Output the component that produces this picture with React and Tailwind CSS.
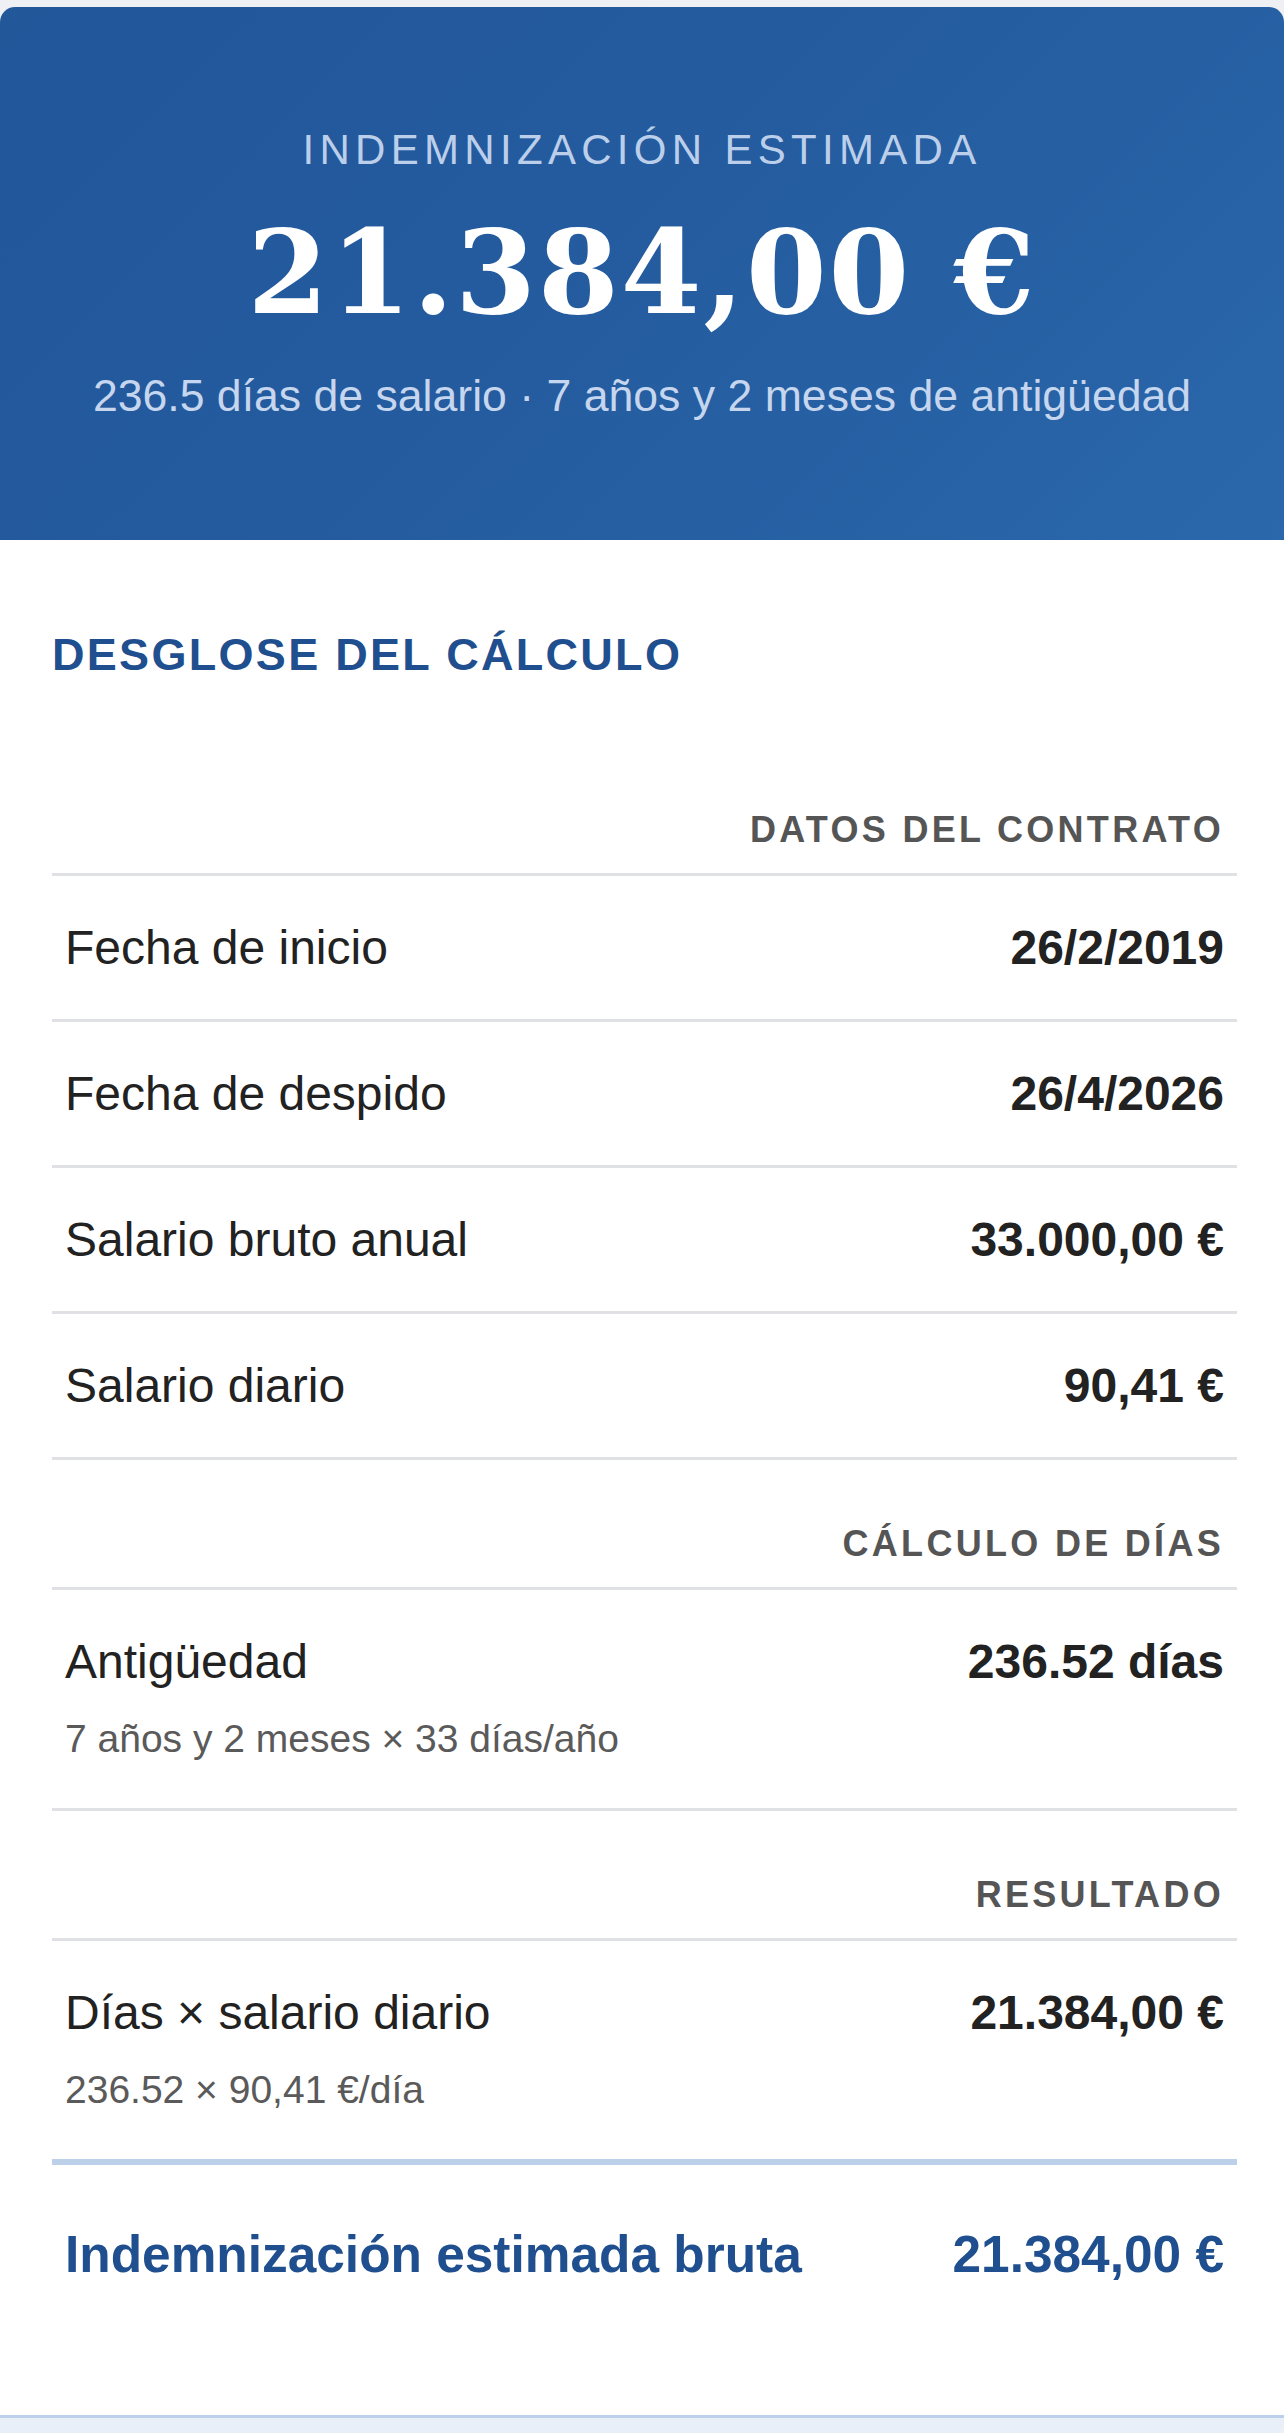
import React from "react";

const sans = { fontFamily: '"Liberation Sans", Arial, Helvetica, sans-serif' };

function SectionHeader({ children }) {
  return (
    <div className="pt-[57px] pb-[16px] px-[13px] border-b-[3px] border-[#dfe1e5] text-right">
      <span className="text-[36px] leading-[54px] font-bold tracking-[3.3px] text-[#555555]">{children}</span>
    </div>
  );
}

function Row({ label, value, sub, last }) {
  return (
    <div
      className={
        "flex items-start justify-between px-[13px] pt-[36px] " +
        (sub ? "pb-[40px] " : "pb-[36px] ") +
        (last ? "border-b-[6px] border-[#bcd0ea]" : "border-b-[3px] border-[#dfe1e5]")
      }
    >
      <div className="flex flex-col">
        <span className="text-[48px] leading-[71px] text-[#222222]">{label}</span>
        {sub && <span className="mt-[13px] text-[39px] leading-[58px] text-[#5a5a5a]">{sub}</span>}
      </div>
      <span className="text-[48px] leading-[71px] font-bold text-[#222222]">{value}</span>
    </div>
  );
}

export default function App() {
  return (
    <div className="w-[1284px] min-h-[2433px] bg-[#eef0f3] pt-[7px]" style={sans}>
      <div className="bg-white rounded-t-[15px] overflow-hidden">
        {/* Result header */}
        <div className="bg-[linear-gradient(135deg,#22579a_0%,#245c9f_50%,#2a67ab_100%)] pt-[111px] pb-[110px] flex flex-col items-center text-center">
          <div className="text-[42px] leading-[63px] tracking-[5.3px] text-[#bccfea]">INDEMNIZACIÓN ESTIMADA</div>
          <div
            className="mt-[33px] text-[116px] leading-none font-bold tracking-[2px] text-white"
            style={{ fontFamily: '"DejaVu Serif", "Liberation Serif", Georgia, serif' }}
          >
            21.384,00 €
          </div>
          <div className="mt-[32px] text-[44.6px] leading-[67.5px] text-[#c6d6ee]">
            236.5 días de salario · 7 años y 2 meses de antigüedad
          </div>
        </div>

        {/* Breakdown */}
        <div className="pl-[52px] pr-[47px] pb-[122px]">
          <h2 className="mt-[81px] mb-[58px] text-[45px] leading-[67.5px] font-bold tracking-[2.3px] text-[#1f4f8e]">
            DESGLOSE DEL CÁLCULO
          </h2>

          <SectionHeader>DATOS DEL CONTRATO</SectionHeader>
          <Row label="Fecha de inicio" value="26/2/2019" />
          <Row label="Fecha de despido" value="26/4/2026" />
          <Row label="Salario bruto anual" value="33.000,00 €" />
          <Row label="Salario diario" value="90,41 €" />

          <SectionHeader>CÁLCULO DE DÍAS</SectionHeader>
          <Row label="Antigüedad" value="236.52 días" sub="7 años y 2 meses × 33 días/año" />

          <SectionHeader>RESULTADO</SectionHeader>
          <Row label="Días × salario diario" value="21.384,00 €" sub="236.52 × 90,41 €/día" last />

          <div className="flex items-center justify-between px-[13px] pt-[51px]">
            <span className="text-[51.4px] leading-[76.5px] font-bold text-[#1f4f8e]">Indemnización estimada bruta</span>
            <span className="text-[51.4px] leading-[76.5px] font-bold text-[#1f4f8e]">21.384,00 €</span>
          </div>
        </div>
      </div>

      {/* Next panel peeking in */}
      <div className="h-[20px] bg-[#e8eff9] border-t-[3px] border-[#bcd0ec] rounded-br-[15px]" />
    </div>
  );
}
